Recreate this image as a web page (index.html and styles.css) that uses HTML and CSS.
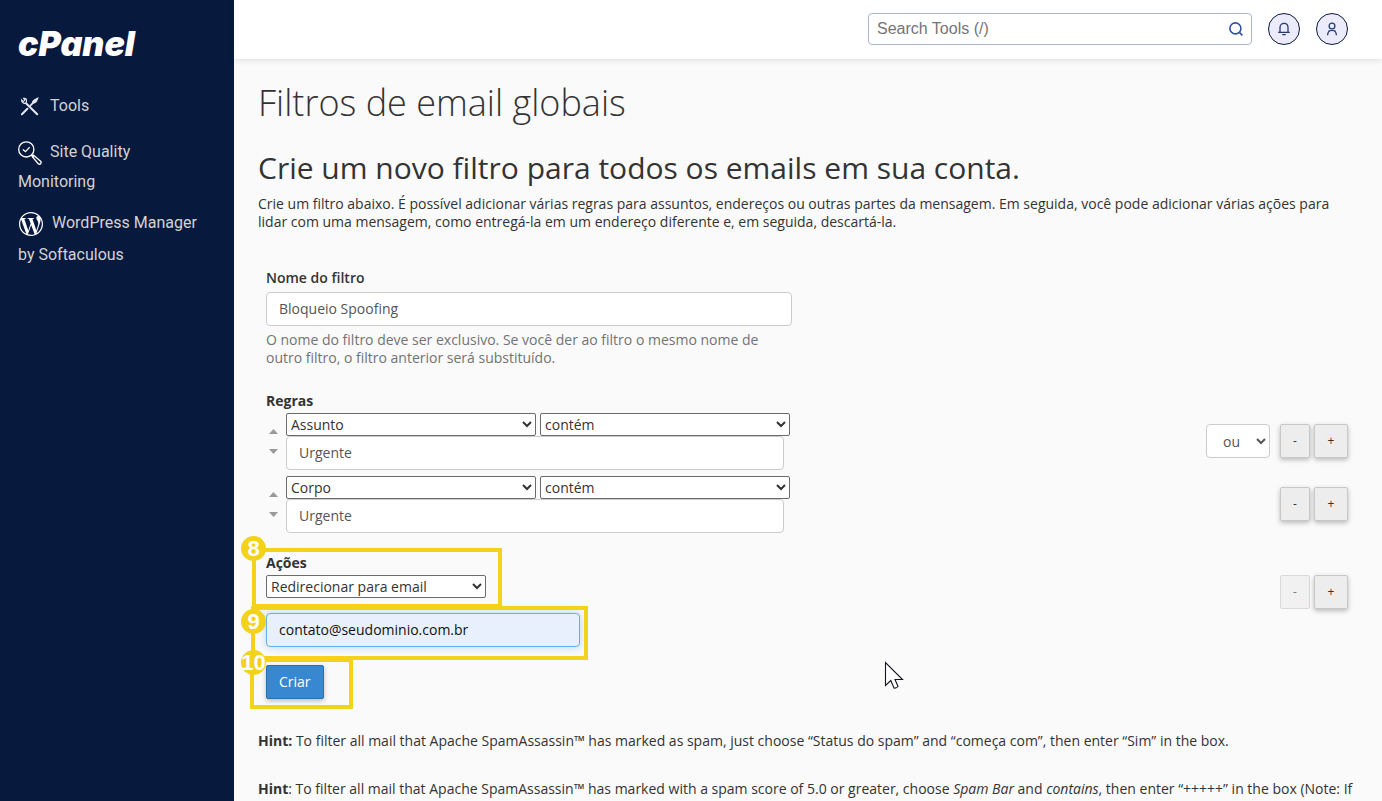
FILE: index.html
```html
<!DOCTYPE html>
<html lang="pt-BR">
<head>
<meta charset="utf-8">
<meta name="viewport" content="width=device-width, initial-scale=1">
<title>cPanel - Filtros de email globais</title>
<link rel="stylesheet" href="styles.css">
</head>
<body>
<div class="app">
  <aside class="sidebar">
    <a class="logo" href="#">cPanel</a>
    <nav class="nav">
      <a class="nav-link" href="#"><svg class="nav-icon" width="24" height="24" viewBox="0 0 24 24" fill="none" stroke="#e6e8ee" stroke-width="1.7" stroke-linecap="round"><path d="M3.9 19.300 9.400 13.800" stroke-width="2"/><path d="M8 8.200 19.200 19.300" stroke-width="2"/><path d="M3.600 4.900 5.400 6.600 7 5 5.600 3.400C7.600 2.900 9.100 4.500 8.500 6.400L8 8.200C5.800 8.800 3.300 7.600 3.600 4.900Z" stroke-width="1.100"/><path d="M12.600 10.300 15 7.900"/><path d="M14.600 7.900C14.500 6.400 16 4.700 19.600 3.300C18.500 6.600 16.700 8.400 14.600 7.900Z" fill="#e6e8ee" stroke-width="1.400"/></svg>Tools</a>
      <a class="nav-link nav-quality" href="#"><svg class="nav-icon" width="24" height="24" viewBox="0 0 24 24" fill="none" stroke="#fff" stroke-width="1.3"><circle cx="8.3" cy="8.4" r="7.6"/><path d="M4.9 8.4 7.5 10.6 11.7 6.1M13.5 14 16 16.4"/><path d="M15.6 14.2 22.6 20.2C24 21.8 22.3 24 20.4 22.9L14.3 15.7C14 14.7 14.7 13.9 15.6 14.2Z"/></svg>Site Quality Monitoring</a>
      <a class="nav-link" href="#"><svg class="nav-icon wp-icon" width="24" height="24" viewBox="0 0 24 24" fill="#fff"><path d="M21.469 6.825c.84 1.537 1.318 3.3 1.318 5.175 0 3.979-2.156 7.456-5.363 9.325l3.295-9.527c.615-1.54.82-2.771.82-3.864 0-.405-.026-.78-.07-1.11m-7.981.105c.647-.03 1.232-.105 1.232-.105.582-.075.514-.93-.067-.899 0 0-1.755.135-2.88.135-1.064 0-2.85-.15-2.85-.15-.585-.03-.661.855-.075.885 0 0 .54.061 1.125.09l1.68 4.605-2.37 7.08L5.354 6.9c.649-.03 1.234-.1 1.234-.1.585-.075.516-.93-.065-.896 0 0-1.746.138-2.874.138-.2 0-.438-.008-.69-.015C4.911 3.15 8.235 1.215 12 1.215c2.809 0 5.365 1.072 7.286 2.833-.046-.003-.091-.009-.141-.009-1.06 0-1.812.923-1.812 1.914 0 .89.513 1.643 1.06 2.531.411.72.89 1.643.89 2.977 0 .915-.354 1.994-.821 3.479l-1.075 3.585-3.9-11.61.001.014zM12 22.784c-1.059 0-2.081-.153-3.048-.437l3.237-9.406 3.315 9.087c.024.053.05.101.078.149-1.12.393-2.325.609-3.582.609M1.211 12c0-1.564.336-3.05.935-4.39L7.29 21.709C3.694 19.96 1.212 16.271 1.211 12M12 0C5.385 0 0 5.385 0 12s5.385 12 12 12 12-5.385 12-12S18.615 0 12 0"/></svg>WordPress Manager by Softaculous</a>
    </nav>
  </aside>
  <div class="page">
    <header class="topbar">
      <form class="search" role="search">
        <input class="search-input" type="search" placeholder="Search Tools (/)" aria-label="Search Tools">
        <button class="search-button" type="button" aria-label="Search"><svg width="16" height="16" viewBox="0 0 16 16" fill="none" stroke="#33519a" stroke-width="1.6"><circle cx="7.4" cy="7.4" r="5.5"/><path d="M11.4 11.4 14.4 14.4"/></svg></button>
      </form>
      <button class="round-button" type="button" aria-label="Notifications"><svg width="16" height="16" viewBox="0 0 16 16" fill="none" stroke="#253b6e" stroke-width="1.3"><path d="M2.2 11.3H13.8M4 11.3V6.4C4 1 12 1 12 6.4V11.3M6.3 13.6H9.7"/></svg></button>
      <button class="round-button" type="button" aria-label="Account"><svg width="16" height="16" viewBox="0 0 16 16" fill="none" stroke="#253b6e" stroke-width="1.3"><circle cx="8" cy="5" r="2.900"/><path d="M3.600 14.200C3.600 11.500 5.400 9.300 8 9.300S12.400 11.500 12.400 14.200M5.400 10.300 4.600 9.500M10.600 10.300 11.400 9.500"/></svg></button>
    </header>
    <main class="content">
      <h1 class="title">Filtros de email globais</h1>
      <h2 class="subtitle">Crie um novo filtro para todos os emails em sua conta.</h2>
      <p class="intro">Crie um filtro abaixo. É possível adicionar várias regras para assuntos, endereços ou outras partes da mensagem. Em seguida, você pode adicionar várias ações para lidar com uma mensagem, como entregá-la em um endereço diferente e, em seguida, descartá-la.</p>
      <form class="filter-form">
        <div class="field">
          <label class="label" for="name">Nome do filtro</label>
          <input class="text-input" id="name" type="text" value="Bloqueio Spoofing">
          <p class="help">O nome do filtro deve ser exclusivo. Se você der ao filtro o mesmo nome de outro filtro, o filtro anterior será substituído.</p>
        </div>
        <section class="rules">
          <h3 class="label">Regras</h3>
          <div class="rule">
            <div class="sorter"><button class="arrow arrow-up" type="button" aria-label="Mover para cima"></button><button class="arrow arrow-down" type="button" aria-label="Mover para baixo"></button></div>
            <div class="rule-fields">
              <div class="rule-selects">
                <select class="select" aria-label="Parte da mensagem"><option>Assunto</option></select>
                <select class="select" aria-label="Operador"><option>contém</option></select>
              </div>
              <input class="text-input rule-input" type="text" value="Urgente" aria-label="Valor">
            </div>
            <div class="row-buttons">
              <select class="join-select" aria-label="Conjunção"><option>ou</option></select>
              <button class="small-button minus" type="button">-</button>
              <button class="small-button" type="button">+</button>
            </div>
          </div>
          <div class="rule">
            <div class="sorter"><button class="arrow arrow-up" type="button" aria-label="Mover para cima"></button><button class="arrow arrow-down" type="button" aria-label="Mover para baixo"></button></div>
            <div class="rule-fields">
              <div class="rule-selects">
                <select class="select" aria-label="Parte da mensagem"><option>Corpo</option></select>
                <select class="select" aria-label="Operador"><option>contém</option></select>
              </div>
              <input class="text-input rule-input" type="text" value="Urgente" aria-label="Valor">
            </div>
            <div class="row-buttons">
              <button class="small-button minus" type="button">-</button>
              <button class="small-button" type="button">+</button>
            </div>
          </div>
        </section>
        <section class="actions">
          <div class="action-main">
            <label class="label" for="action">Ações</label>
            <select class="select action-select" id="action"><option>Redirecionar para email</option></select>
            <input class="text-input email-input" type="email" value="contato@seudominio.com.br" aria-label="Email de destino">
            <button class="submit" type="button">Criar</button>
          </div>
          <div class="row-buttons">
            <button class="small-button minus" type="button" disabled>-</button>
            <button class="small-button" type="button">+</button>
          </div>
          <div class="callout callout-8"><span class="badge">8</span></div>
          <div class="callout callout-9"><span class="badge">9</span></div>
          <div class="callout callout-10"><span class="badge">10</span></div>
        </section>
      </form>
      <p class="hint"><strong>Hint:</strong> To filter all mail that Apache SpamAssassin™ has marked as spam, just choose “Status do spam” and “começa com”, then enter “Sim” in the box.</p>
      <p class="hint"><strong>Hint</strong>: To filter all mail that Apache SpamAssassin™ has marked with a spam score of 5.0 or greater, choose <em>Spam Bar</em> and <em>contains</em>, then enter “+++++” in the box (Note: If</p>
    </main>
  </div>
</div>
<svg class="pointer" width="20" height="30" viewBox="0 0 20 30" fill="#fff" stroke="#15151f" stroke-width="1.1"><path d="M1.5 1.5V24.5L6.8 19.5 10 27Q12.500 27.500 14 25.500L11 18.500H18.500Z"/></svg>
</body>
</html>
```
FILE: styles.css
```css
* { box-sizing: border-box; }

body {
  margin: 0;
  background: #fafafa;
  color: #333;
  font: 14px/18px "Open Sans", sans-serif;
}

button, input, select { font: inherit; color: inherit; }
h1, h2, h3, p { margin: 0; }

.app {
  display: flex;
  height: 100vh;
  overflow: hidden;
}

.sidebar {
  flex: 0 0 234px;
  padding: 24px 18px;
  background: #08193e;
}

.logo {
  display: block;
  color: #fff;
  font: italic 900 34px/40px Inter, sans-serif;
  text-decoration: none;
}

.nav {
  display: flex;
  flex-direction: column;
  gap: 10px;
  margin-top: 26px;
  padding-right: 12px;
}

.nav-link {
  color: #d3d3d3;
  font: 16px/32px Roboto, sans-serif;
  text-decoration: none;
}
.nav-quality { margin-top: 5px; line-height: 30px; }
.nav-icon { margin-right: 8px; vertical-align: middle; }
.wp-icon { margin: 0 9px 0 1px; }

.page {
  flex: 1;
  min-width: 0;
  display: flex;
  flex-direction: column;
}

.topbar {
  display: flex;
  flex: none;
  justify-content: flex-end;
  gap: 16px;
  padding: 13px 34px 14px 24px;
  background: #fff;
  box-shadow: 0 1px 6px rgba(0, 0, 0, .12);
}

.search {
  display: flex;
  align-items: center;
  width: 384px;
  height: 32px;
  border: 1px solid #a9b7cf;
  border-radius: 4px;
  background: #fff;
}
.search-input {
  flex: 1;
  min-width: 0;
  padding: 0 8px;
  border: 0;
  background: none;
  font: 16px/20px "Liberation Sans", Arial, sans-serif;
}
.search-input::placeholder { color: #757575; }
.search-button {
  display: flex;
  padding: 0 7px;
  border: 0;
  background: none;
}

.round-button {
  display: grid;
  place-items: center;
  width: 32px;
  height: 32px;
  padding: 0;
  border: 1px solid #08193e;
  border-radius: 50%;
  background: #ebebfb;
}

.content {
  flex: 1;
  min-height: 0;
  overflow: hidden;
  padding: 22px 24px 0;
}
.title { font-weight: 300; font-size: 36px; line-height: 44px; }
.subtitle { margin-top: 23px; font-weight: 400; font-size: 30px; line-height: 40px; }
.intro { margin-top: 7px; padding-right: 16px; }

.filter-form { padding: 38px 10px 0 8px; }
.label { display: block; font-weight: 600; font-size: 14px; line-height: 18px; }
.rules .label, .actions .label { font-weight: 700; }

.text-input {
  display: block;
  width: 100%;
  height: 34px;
  padding: 0 12px 2px;
  border: 1px solid #ccc;
  border-radius: 4px;
  background: #fff;
  color: #555;
}
.field { max-width: 526px; }
.field .text-input { margin-top: 5px; }
.help { margin-top: 5px; color: #737373; }

.rules { margin-top: 25px; }
.rule { display: flex; margin-top: 6px; }
.label + .rule { margin-top: 3px; }
.sorter {
  display: flex;
  flex-direction: column;
  gap: 15px;
  width: 20px;
  padding: 16px 3px 0;
}
.arrow {
  width: 9px;
  height: 5px;
  padding: 0;
  border: 0;
  background: #999;
}
.arrow-up { clip-path: polygon(50% 0, 100% 100%, 0 100%); }
.arrow-down { clip-path: polygon(0 0, 100% 0, 50% 100%); }
.rule-fields { flex: 0 1 504px; }
.rule-selects { display: flex; gap: 4px; }
.rule-input { max-width: 498px; }

.select {
  flex: 1;
  min-width: 0;
  height: 23px;
  padding: 0;
  border: 1px solid #6b6b6b;
  border-radius: 2px;
  background: #fff;
  color: #333;
}

.row-buttons {
  display: flex;
  gap: 4px;
  margin: 11px 0 0 auto;
}
.join-select {
  width: 64px;
  height: 34px;
  margin-right: 6px;
  padding: 0 0 0 12px;
  border: 1px solid #ccc;
  border-radius: 4px;
  background: #fff;
  color: #555;
}
.small-button {
  width: 34px;
  height: 34px;
  padding: 0;
  border: 1px solid #c8c8c8;
  border-radius: 2px;
  background: #ededed;
  box-shadow: 0 2px 5px rgba(0, 0, 0, .26);
  font-size: 12px;
}
.minus { width: 30px; }
.small-button:disabled { opacity: .65; box-shadow: none; }

.actions {
  position: relative;
  display: flex;
  margin-top: 21px;
}
.actions .row-buttons { margin-top: 21px; }
.action-main { width: 314px; }
.action-select { display: block; width: 220px; margin-top: 3px; }
.email-input {
  margin-top: 15px;
  border-color: #66afe9;
  background: #e8f0fe;
  color: #111;
  box-shadow: 0 0 8px rgba(102, 175, 233, .5);
}
.submit {
  height: 34px;
  margin-top: 18px;
  padding: 0 12px;
  border: 1px solid #2a6fb0;
  border-radius: 2px;
  background: #3788d0;
  box-shadow: 0 2px 5px rgba(0, 0, 0, .26);
  color: #fff;
}

.callout {
  position: absolute;
  border: 4px solid #f2d21b;
  pointer-events: none;
}
.callout-8 { left: -14px; top: -6px; width: 250px; height: 60px; }
.callout-9 { left: -15px; top: 52px; width: 337px; height: 54px; }
.callout-10 { left: -16px; top: 104px; width: 103px; height: 51px; }
.badge {
  position: absolute;
  left: -15px;
  top: -16px;
  width: 25px;
  height: 25px;
  border-radius: 50%;
  background: #f2d21b;
  color: #fff;
  font: 700 22px/26px "Liberation Sans", Arial, sans-serif;
  text-align: center;
}
.callout-9 .badge { left: -14px; top: -1px; }
.callout-10 .badge { left: -13px; top: -12px; }

.hint { margin: 33px 0 30px; }
.hint + .hint { margin: 0; white-space: nowrap; }

.pointer { position: fixed; left: 884px; top: 661px; }
```
